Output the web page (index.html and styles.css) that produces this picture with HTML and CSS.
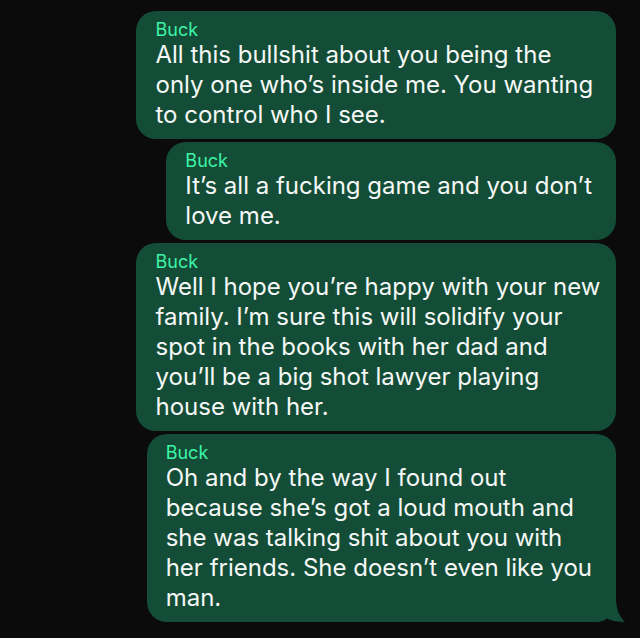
FILE: index.html
```
<!DOCTYPE html>
<html lang="en">
<head>
    <meta charset="UTF-8">
    <meta name="viewport" content="width=device-width, initial-scale=1.0">
    <title>Chat</title>
    <link rel="stylesheet" href="styles.css">
</head>
<body>
    <main class="chat">
        <article class="message">
            <h2 class="sender">Buck</h2>
            <p class="text">All this bullshit about you being the<br>only one who’s inside me. You wanting<br>to control who I see.</p>
        </article>

        <article class="message">
            <h2 class="sender">Buck</h2>
            <p class="text">It’s all a fucking game and you don’t<br>love me.</p>
        </article>

        <article class="message">
            <h2 class="sender">Buck</h2>
            <p class="text">Well I hope you’re happy with your new<br>family. I’m sure this will solidify your<br>spot in the books with her dad and<br>you’ll be a big shot lawyer playing<br>house with her.</p>
        </article>

        <article class="message">
            <h2 class="sender">Buck</h2>
            <p class="text">Oh and by the way I found out<br>because she’s got a loud mouth and<br>she was talking shit about you with<br>her friends. She doesn’t even like you<br>man.</p>
            <svg class="tail" viewBox="0 0 30 30" aria-hidden="true">
                <path d="M20 0 V6 C20 17 23 24 29 30 C22 30 16 29 12 27 L0 10 V0 Z"></path>
            </svg>
        </article>
    </main>
</body>
</html>
```

FILE: styles.css
```
* {
    box-sizing: border-box;
}

body {
    margin: 0;
    background-color: #0b0b0b;
    font-family: Inter, "Liberation Sans", sans-serif;
}

.chat {
    display: flex;
    flex-direction: column;
    align-items: flex-end;
    gap: 3px;
    padding: 11px 24px 14px;
}

.message {
    position: relative;
    max-width: 81%;
    padding: 8px 24px 9px 19px;
    background-color: #144d37;
    border-radius: 20px;
}

.sender {
    margin: 0;
    color: #3cf5a8;
    font-size: 18px;
    font-weight: 400;
    line-height: 21px;
}

.text {
    margin: 0;
    color: #f5f8f6;
    font-size: 24px;
    line-height: 30px;
    white-space: nowrap;
}

.tail {
    position: absolute;
    right: -10px;
    bottom: 0;
    width: 30px;
    height: 30px;
    fill: #144d37;
}
```
